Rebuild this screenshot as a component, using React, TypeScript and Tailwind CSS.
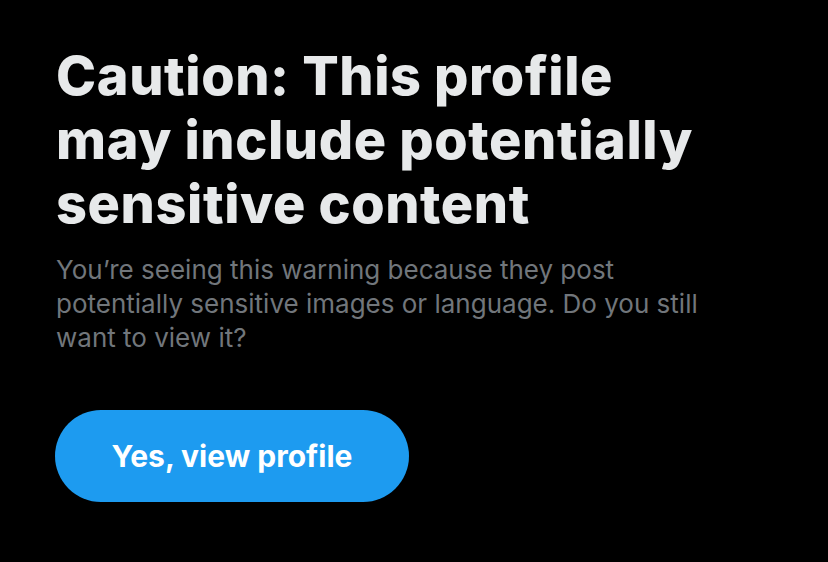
export default function App() {
  return (
    <div className="w-[828px] h-[562px] bg-black overflow-hidden" style={{ fontFamily: "Inter, 'Noto Sans', sans-serif" }}>
      <div className="pl-[56px] pt-[44px] pr-[40px]">
        <h1 className="text-[#e7e9ea] text-[54px] leading-[64px] font-extrabold tracking-[0.6px] max-w-[655px]">
          Caution: This profile may include potentially sensitive content
        </h1>
        <p className="mt-[17px] text-[#71767b] text-[26px] leading-[34px] max-w-[680px]">
          You’re seeing this warning because they post potentially sensitive images or language. Do you still want to view it?
        </p>
        <button className="mt-[55px] -ml-px h-[92px] w-[354px] rounded-full bg-[#1d9bf0] text-white text-[30px] font-bold">
          Yes, view profile
        </button>
      </div>
    </div>
  );
}
